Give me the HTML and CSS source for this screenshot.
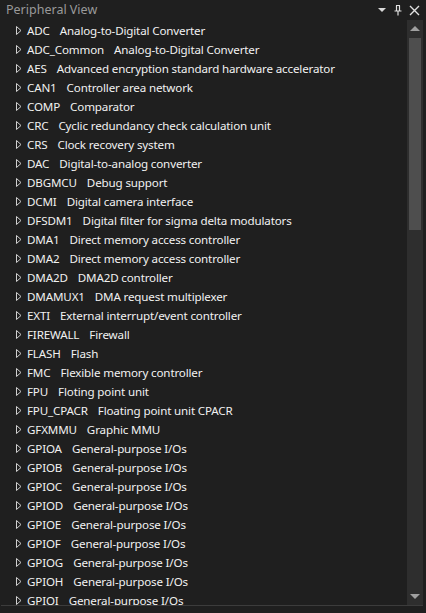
FILE: index.html
```html
<!DOCTYPE html>
<html>
<head>
<meta charset="utf-8">
<link rel="stylesheet" href="styles.css">
</head>
<body>
<div class="window">
  <div class="titlebar">
    <span class="title">Peripheral View</span>
    <div class="tools">
      <svg class="tool" width="10" height="10" viewBox="0 0 10 10"><path d="M1 3h8L5 7z" fill="#d8d8d8"/></svg>
      <svg class="tool" width="10" height="12" viewBox="0 0 10 12"><path d="M3 1.5h4M3.5 1.5v5M6.5 1.5v5M1.5 7h7M5 7v4.5" stroke="#e0e0e0" stroke-width="1.2" fill="none"/></svg>
      <svg class="tool" width="11" height="11" viewBox="0 0 11 11"><path d="M1 1l9 9M10 1l-9 9" stroke="#e0e0e0" stroke-width="1.4"/></svg>
    </div>
  </div>
  <div class="panel">
    <ul class="list" id="list"></ul>
    <div class="scrollbar">
      <svg class="arrow" width="12" height="8" viewBox="0 0 12 8"><path d="M1 7L6 2l5 5z" fill="#a0a0a0"/></svg>
      <div class="track"><div class="thumb"></div></div>
      <svg class="arrow" width="12" height="8" viewBox="0 0 12 8"><path d="M1 1h10L6 6z" fill="#a0a0a0"/></svg>
    </div>
  </div>
</div>
<script src="app.js"></script>
</body>
</html>
```
FILE: app.js
```js
const items = [
["ADC","Analog-to-Digital Converter"],
["ADC_Common","Analog-to-Digital Converter"],
["AES","Advanced encryption standard hardware accelerator"],
["CAN1","Controller area network"],
["COMP","Comparator"],
["CRC","Cyclic redundancy check calculation unit"],
["CRS","Clock recovery system"],
["DAC","Digital-to-analog converter"],
["DBGMCU","Debug support"],
["DCMI","Digital camera interface"],
["DFSDM1","Digital filter for sigma delta modulators"],
["DMA1","Direct memory access controller"],
["DMA2","Direct memory access controller"],
["DMA2D","DMA2D controller"],
["DMAMUX1","DMA request multiplexer"],
["EXTI","External interrupt/event controller"],
["FIREWALL","Firewall"],
["FLASH","Flash"],
["FMC","Flexible memory controller"],
["FPU","Floting point unit"],
["FPU_CPACR","Floating point unit CPACR"],
["GFXMMU","Graphic MMU"],
["GPIOA","General-purpose I/Os"],
["GPIOB","General-purpose I/Os"],
["GPIOC","General-purpose I/Os"],
["GPIOD","General-purpose I/Os"],
["GPIOE","General-purpose I/Os"],
["GPIOF","General-purpose I/Os"],
["GPIOG","General-purpose I/Os"],
["GPIOH","General-purpose I/Os"],
["GPIOI","General-purpose I/Os"]
];
const list = document.getElementById('list');
for (const [n, d] of items) {
  const li = document.createElement('li');
  li.className = 'row';
  li.innerHTML = '<svg class="exp" width="6" height="9" viewBox="0 0 6 9"><path d="M0.5 0.5L5 4.5L0.5 8.5z" fill="#1f1f1f" stroke="#d0d0d0" stroke-width="1"/></svg>' +
    '<span class="name"></span><span class="desc"></span>';
  li.querySelector('.name').textContent = n;
  li.querySelector('.desc').textContent = d;
  list.appendChild(li);
}
```
FILE: styles.css
```css
html, body {
  margin: 0;
  padding: 0;
  background: #1f1f1f;
  width: 426px;
  height: 613px;
  overflow: hidden;
}
.window {
  width: 426px;
  height: 613px;
  display: flex;
  flex-direction: column;
  font-family: "Noto Sans", "Open Sans", sans-serif;
  font-size: 11.6px;
  letter-spacing: -0.15px;
  color: #f1f1f1;
}
.titlebar {
  height: 20px;
  display: flex;
  align-items: center;
  justify-content: space-between;
  padding: 0 6px 0 6px;
  flex-shrink: 0;
}
.title {
  color: #9a9a9a;
  font-size: 12.5px;
  letter-spacing: 0;
  line-height: 20px;
}
.tools {
  display: flex;
  align-items: center;
  gap: 6px;
}
.tool { display: block; }
.panel {
  height: 586px;
  display: flex;
  border-bottom: 1px solid #3c3c3c;
  box-sizing: border-box;
  margin: 0 3px 0 1px;
}
.list {
  flex: 1;
  list-style: none;
  margin: 0;
  padding: 1px 0 0 0;
  overflow: hidden;
}
.row {
  height: 19px;
  display: flex;
  align-items: center;
  padding-left: 15px;
  white-space: nowrap;
}
.exp {
  flex-shrink: 0;
  margin-right: 5px;
}
.name { margin-right: 10px; }
.scrollbar {
  width: 16px;
  background: #2e2e2e;
  display: flex;
  flex-direction: column;
  align-items: center;
  padding: 4px 0 4px 0;
  box-sizing: border-box;
}
.arrow { display: block; flex-shrink: 0; }
.track {
  flex: 1;
  width: 100%;
  padding: 6px 2px 0 2px;
  box-sizing: border-box;
}
.thumb {
  height: 192px;
  background: #4e4e4e;
}
```
